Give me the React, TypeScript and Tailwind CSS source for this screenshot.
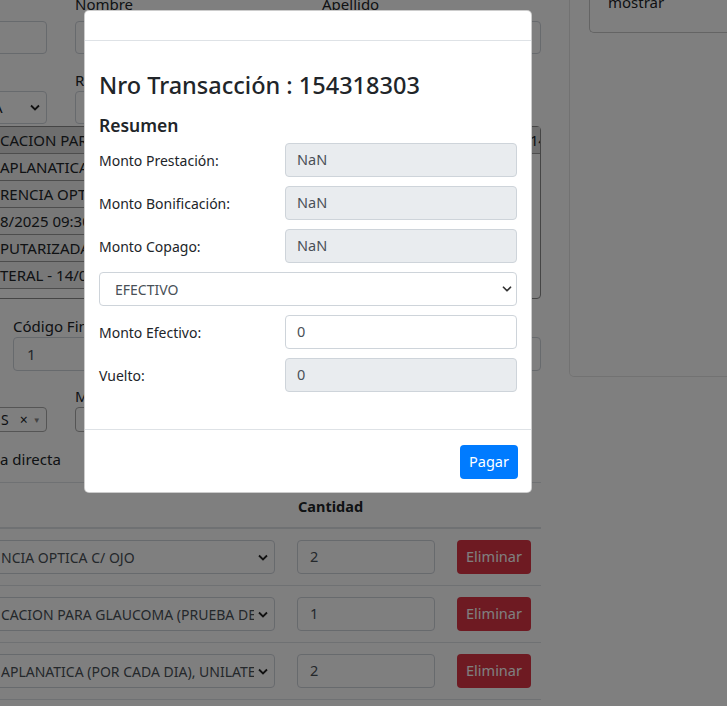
import { ChevronDown } from "lucide-react";

function Chevron({ className = "" }: { className?: string }) {
  return (
    <svg width="10" height="7" viewBox="0 0 10 7" className={className}>
      <path d="M1 1.5l4 4 4-4" fill="none" stroke="#222" strokeWidth="1.8" />
    </svg>
  );
}

function Field({ label, value, disabled }: { label: string; value: string; disabled?: boolean }) {
  return (
    <div className="flex h-[34px] items-center">
      <span className="w-[186px] shrink-0 text-[14px]">{label}</span>
      <div
        className={`flex h-[34px] flex-1 items-center rounded-[4px] border border-[#ced4da] px-[11px] text-[14.5px] text-[#495057] ${
          disabled ? "bg-[#e9ecef]" : "bg-white"
        }`}
      >
        {value}
      </div>
    </div>
  );
}

const items = [
  "CACION PARA GLAUCOMA (PRUEBA DE PROVOCACION) UNILATERAL",
  "APLANATICA (POR CADA DIA), UNILATERAL",
  "RENCIA OPTICA C/ OJO",
  "8/2025 09:30",
  "PUTARIZADA, BILATERAL",
  "TERAL - 14/08/2025",
];

const rows = [
  { text: "NCIA OPTICA C/ OJO", qty: "2" },
  { text: "CACION PARA GLAUCOMA (PRUEBA DE PROVOCACION)", qty: "1" },
  { text: "APLANATICA (POR CADA DIA), UNILATERAL", qty: "2" },
];

export default function App() {
  return (
    <div className="relative h-[706px] w-[727px] overflow-hidden bg-white font-['Noto_Sans',sans-serif] text-[#212529]">
      <div className="flex">
        <main className="-ml-[172px] w-[713px] shrink-0 text-[15px]">
          {/* nombre / apellido */}
          <div className="-mt-[8px] grid grid-cols-3 gap-x-[28px]">
            <div className="pt-[29px]">
              <div className="h-[33px] rounded-[4px] border border-[#ced4da]" />
            </div>
            <div>
              <p className="h-[29px] leading-[24px]">Nombre</p>
              <div className="h-[33px] rounded-[4px] border border-[#ced4da]" />
            </div>
            <div>
              <p className="h-[29px] leading-[24px]">Apellido</p>
              <div className="h-[33px] rounded-[4px] border border-[#ced4da]" />
            </div>
          </div>

          <div className="mt-[15px] grid grid-cols-3 items-end gap-x-[28px]">
            <div className="flex h-[33px] items-center justify-end rounded-[4px] border border-[#ced4da] pr-[6px]">
              <span className="mr-auto pl-[164px]">A</span>
              <Chevron />
            </div>
            <div>
              <p className="h-[22px] leading-[22px]">Región</p>
              <div className="h-[33px] rounded-[4px] border border-[#ced4da]" />
            </div>
            <div />
          </div>

          {/* lista */}
          <div className="mt-[2px] h-[173px] rounded-[4px] border border-[#8a8a8a]">
            {items.map((t, i) => (
              <div
                key={t}
                className={`flex h-[27px] items-center overflow-hidden whitespace-nowrap border-b border-[#9a9a9a] pl-[171px] ${
                  i === 0 ? "w-full bg-[#dcdcdc]" : "w-[590px] border-r bg-[#f0f0f0]"
                }`}
              >
                <span className="min-w-0 flex-1 overflow-hidden">{t}</span>
                {i === 0 && <span className="w-[10px] shrink-0 overflow-hidden">14</span>}
              </div>
            ))}
          </div>

          {/* codigo */}
          <div className="mt-[16px] flex gap-x-[28px] pl-[185px]">
            <div className="w-[250px]">
              <p className="h-[22px] leading-[22px]">Código Financiador</p>
              <div className="flex h-[34px] items-center rounded-[4px] border border-[#ced4da] px-[13px] text-[#495057]">1</div>
            </div>
            <div className="flex-1 pt-[22px]">
              <div className="h-[34px] rounded-[4px] border border-[#ced4da]" />
            </div>
          </div>

          <div className="mt-[14px] grid grid-cols-3 items-end gap-x-[28px]">
            <div className="flex h-[25px] items-center rounded-[4px] border border-[#aaa] pl-[172px] pr-[6px] text-[14px]">
              <span>S</span>
              <span className="ml-[11px] text-[14px]">×</span>
              <span className="ml-[5px] text-[8px] text-[#888]">▼</span>
            </div>
            <div>
              <p className="h-[22px] leading-[22px]">Médico</p>
              <div className="h-[25px] rounded-[4px] border border-[#aaa]" />
            </div>
            <div />
          </div>

          <p className="mt-[16px] pl-[172px] leading-[22px]">a directa</p>

          {/* tabla */}
          <div className="mt-[12px] border-t border-[#dee2e6]">
            <div className="flex h-[46px] items-center border-b-2 border-[#dee2e6] pl-[470px] pt-[3px] text-[14.5px] font-bold">
              Cantidad
            </div>
            {rows.map((r) => (
              <div key={r.qty + r.text} className="flex h-[57px] items-center gap-[22px] border-b border-[#dee2e6] pr-[10px]">
                <div className="flex h-[34px] flex-1 items-center overflow-hidden whitespace-nowrap rounded-[4px] border border-[#ced4da] pl-[172px] pr-[6px] text-[14px] text-[#495057]">
                  <span className="mr-[4px] min-w-0 flex-1 overflow-hidden">{r.text}</span>
                  <Chevron className="shrink-0" />
                </div>
                <div className="flex h-[34px] w-[138px] items-center rounded-[4px] border border-[#ced4da] px-[12px] text-[14.5px] text-[#495057]">
                  {r.qty}
                </div>
                <button className="h-[34px] w-[74px] rounded-[4px] bg-[#dc3545] text-[14.5px] text-white">Eliminar</button>
              </div>
            ))}
          </div>
        </main>

        <aside className="-mt-[20px] ml-[28px] h-[397px] flex-1 rounded-bl-[5px] border-b border-l border-black/10 pl-[19px]">
          <div className="h-[53px] rounded-bl-[5px] border-b border-l border-[#c8c8c8] pl-[18px] pt-[11px] text-[15px]">
            mostrar
          </div>
        </aside>
      </div>

      <div className="absolute inset-0 bg-black/50" />

      {/* modal */}
      <div className="absolute left-[84px] top-[10px] w-[448px] rounded-[5px] border border-black/20 bg-white text-[#212529]">
        <div className="h-[30px] border-b border-[#dee2e6]" />
        <div className="px-[14px] pb-[37px] pt-[30px]">
          <h2 className="text-[23.5px] font-medium leading-[29px]">Nro Transacción : 154318303</h2>
          <h3 className="mt-[13px] text-[17.5px] font-semibold leading-[24px]">Resumen</h3>
          <div className="mt-[6px] flex flex-col gap-[9px]">
            <Field label="Monto Prestación:" value="NaN" disabled />
            <Field label="Monto Bonificación:" value="NaN" disabled />
            <Field label="Monto Copago:" value="NaN" disabled />
            <div className="flex h-[34px] items-center rounded-[4px] border border-[#ced4da] pl-[15px] pr-[2px] text-[14px] text-[#495057]">
              <span className="flex-1">EFECTIVO</span>
              <ChevronDown size={14} strokeWidth={3} className="text-[#333]" />
            </div>
            <Field label="Monto Efectivo:" value="0" />
            <Field label="Vuelto:" value="0" disabled />
          </div>
        </div>
        <div className="flex justify-end border-t border-[#dee2e6] pb-[13px] pr-[13px] pt-[15px]">
          <button className="h-[34px] w-[58px] rounded-[4px] bg-[#007bff] text-[14.5px] text-white">Pagar</button>
        </div>
      </div>
    </div>
  );
}
